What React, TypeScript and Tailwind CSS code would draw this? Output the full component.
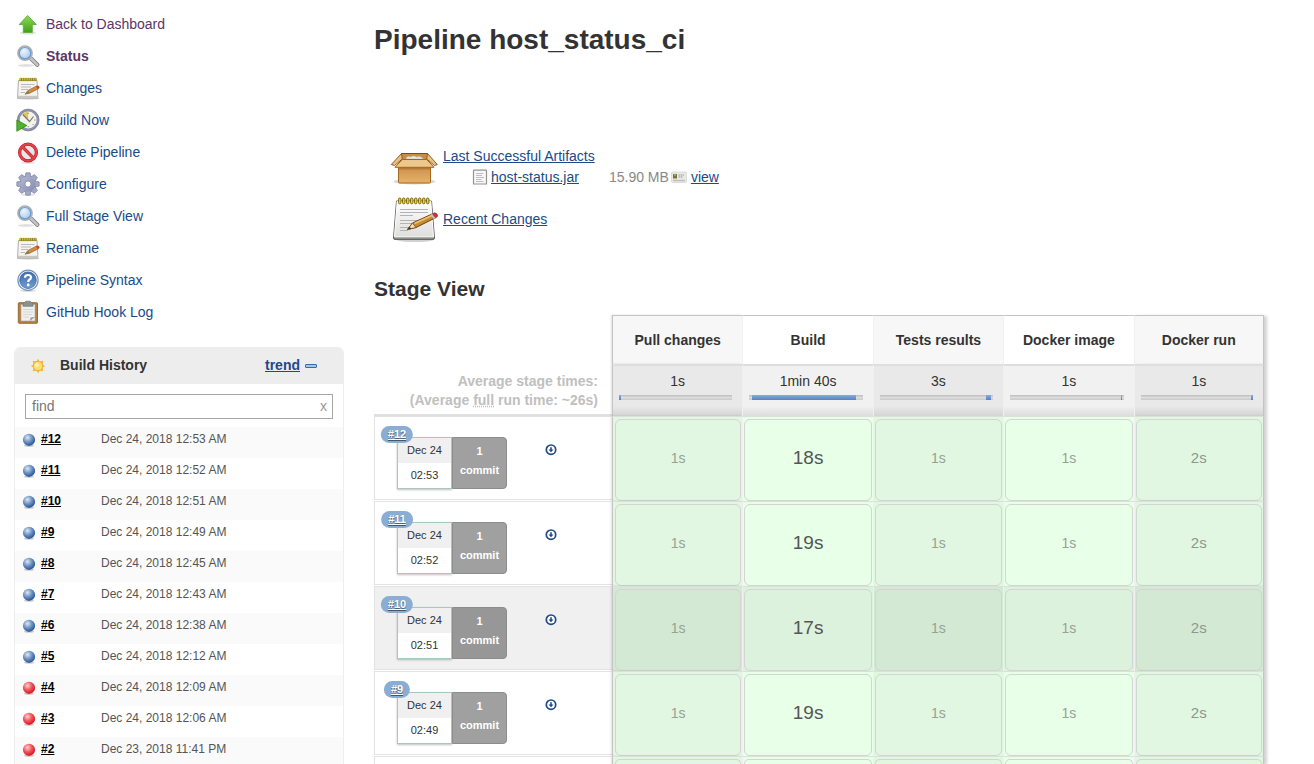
import React from "react";

type IconProps = { className?: string };

function UpArrow({ className }: IconProps) {
  return (
    <svg viewBox="0 0 24 24" className={className} aria-hidden="true">
      <defs>
        <linearGradient id="up-fill" x1="0" y1="0" x2="0" y2="1">
          <stop offset="0" stopColor="#8fdb57" />
          <stop offset="1" stopColor="#3fa01c" />
        </linearGradient>
      </defs>
      <ellipse cx="12" cy="21" rx="8" ry="1.6" fill="#000" opacity=".12" />
      <path d="M11.700 3.500 20.300 12.500H16.300V20.500H7.300V12.500H3.200Z" fill="url(#up-fill)" stroke="#5cae38" strokeWidth=".9" strokeLinejoin="round" />
    </svg>
  );
}

function Magnifier({ className }: IconProps) {
  return (
    <svg viewBox="0 0 24 24" className={className} aria-hidden="true">
      <defs>
        <radialGradient id="lens" cx=".4" cy=".35" r=".7">
          <stop offset="0" stopColor="#eef6fd" />
          <stop offset="1" stopColor="#9cc3e8" />
        </radialGradient>
      </defs>
      <ellipse cx="10" cy="21.500" rx="8" ry="1.500" fill="#000" opacity=".12" />
      <path d="m14.500 14 6.800 6.800" stroke="#808080" strokeWidth="4.200" strokeLinecap="round" />
      <path d="m15 14.500 6.300 6.300" stroke="#c4c4c4" strokeWidth="2.600" strokeLinecap="round" />
      <circle cx="9" cy="9.200" r="7" fill="url(#lens)" stroke="#b0b0b0" strokeWidth="1.800" />
      <circle cx="9" cy="9.200" r="5.700" fill="none" stroke="#6f9bd1" strokeWidth="1.200" />
    </svg>
  );
}

function Notepad({ className }: IconProps) {
  return (
    <svg viewBox="0 0 24 24" className={className} aria-hidden="true">
      <ellipse cx="12" cy="22.500" rx="11" ry="1.200" fill="#000" opacity=".15" />
      <path d="M2.500 4.500H21L22 22.300H1.500Z" fill="#f4f4f1" stroke="#b0b0ab" strokeWidth="1" />
      <path d="M1.700 19.800H21.900L22 22.300H1.500Z" fill="#c6c6c2" />
      <path d="M3.500 3.500H20.700" stroke="#8f7d20" strokeWidth="3.200" />
      <path d="M3.800 3.300H20.500" stroke="#d3bb43" strokeWidth="2.600" strokeDasharray="1.300 .9" />
      <path d="M5 8.500H18.500M5 11H15M5 13.500H12M4.500 16.500H9" stroke="#bbb" strokeWidth="1" />
      <path d="m9 18.200 3-3.800 8.800-4.500 1.700 2.800-8.900 4.500Z" fill="#d58c3a" stroke="#8a5520" strokeWidth=".6" />
      <path d="m9 18.200 3-3.800 1.600 2.800Z" fill="#8e7a50" />
      <path d="m20 10.400 1.700-.9q1.900.2 1.900 2.500l-2.100 1.100Z" fill="#d9402f" />
    </svg>
  );
}

function BigNotepad({ className }: IconProps) {
  return (
    <svg viewBox="0 0 48 48" className={className} aria-hidden="true">
      <defs>
        <linearGradient id="paper" x1="0" y1="0" x2="0" y2="1">
          <stop offset="0" stopColor="#fff" />
          <stop offset="1" stopColor="#dededc" />
        </linearGradient>
      </defs>
      <ellipse cx="25" cy="45" rx="18" ry="2" fill="#000" opacity=".18" />
      <path d="M6.500 6H41.500L44.500 43Q44.500 44.500 43 44.500H5Q3.500 44.500 3.500 43Z" fill="#8c8c89" stroke="#666" strokeWidth="1" />
      <path d="M7.200 6.500H40.800L43.500 41.800H4.500Z" fill="url(#paper)" stroke="#fff" strokeWidth="1" />
      <path d="M10 14.500H38M10 17.500H38M10 20.500H23M10 25.500H32M10 28.500H26M10 32.500H23M10 35.500H18" stroke="#b3b3b3" strokeWidth="1" />
      {[8.500, 12.500, 16.500, 20.500, 24.500, 28.500, 32.500, 36.500].map((x) => (
        <rect key={x} x={x} y="3" width="2.500" height="5.800" rx="1.200" fill="#e8cf3c" stroke="#6f5c08" strokeWidth=".9" />
      ))}
      <path d="M17.500 34.500 22.500 28 42.500 18.800 46 22.500 26 32.500Z" fill="#c98b32" stroke="#6f4109" strokeWidth="1" />
      <path d="M24.500 28.500 43 20" stroke="#ebc47b" strokeWidth="1.600" />
      <path d="M17.500 34.500 22.500 28 26 32.500Z" fill="#f1ddb0" stroke="#6f4109" strokeWidth=".7" />
      <path d="m17.500 34.500 2.200-2.800 1.500 2Z" fill="#333" />
      <path d="m40.500 19.700 2.500-1.200 3.500 4.200-2.700 1.200Z" fill="#bdc3cc" />
      <path d="m42.500 18.700 2-.9q3 .4 3.200 3.400l-2.200 1.600Z" fill="#e02a38" stroke="#9c1822" strokeWidth=".6" />
    </svg>
  );
}

function ClockPlay({ className }: IconProps) {
  return (
    <svg viewBox="0 0 24 24" className={className} aria-hidden="true">
      <circle cx="12.200" cy="12" r="9.600" fill="#f4f3ea" stroke="#9093ad" strokeWidth="2.400" />
      <circle cx="12.200" cy="12" r="10.900" fill="none" stroke="#6c6f88" strokeWidth=".7" />
      <path d="M12.200 12 6.500 6Q9 3.700 12.200 3.700Z" fill="#e3c654" />
      <path d="M6.800 6.500 13.500 13.500 17.500 8.500" fill="none" stroke="#777" strokeWidth="1.200" />
      <path d="M12.200 4.800V6M19.500 12H18.200M12.200 19.200V18M17.500 17l-.8-.8" stroke="#888" strokeWidth="1" />
      <path d="M.8 12 10.800 17.500.8 23.300Z" fill="#4db22c" stroke="#2f8716" strokeWidth=".8" />
    </svg>
  );
}

function NoEntry({ className }: IconProps) {
  return (
    <svg viewBox="0 0 24 24" className={className} aria-hidden="true">
      <ellipse cx="12" cy="22.800" rx="7" ry="1" fill="#000" opacity=".12" />
      <circle cx="12" cy="12.500" r="8.400" fill="#e9e6e6" stroke="#c01824" strokeWidth="3.200" />
      <path d="m6.200 6.700 11.600 11.600" stroke="#c01824" strokeWidth="3.200" />
      <circle cx="12" cy="12.500" r="8.400" fill="none" stroke="#e3404a" strokeWidth="2.200" />
      <path d="m6.200 6.700 11.600 11.600" stroke="#e3404a" strokeWidth="2.200" />
    </svg>
  );
}

function Gear({ className }: IconProps) {
  return (
    <svg viewBox="0 0 24 24" className={className} aria-hidden="true">
      <defs>
        <linearGradient id="gear" x1="0" y1="0" x2="1" y2="1">
          <stop offset="0" stopColor="#b4b9d2" />
          <stop offset="1" stopColor="#8589b0" />
        </linearGradient>
      </defs>
      <ellipse cx="12" cy="22.800" rx="7" ry="1" fill="#000" opacity=".12" />
      <g fill="#a3a8c6" stroke="#7f84a6" strokeWidth=".7">
        {[0, 45, 90, 135, 180, 225, 270, 315].map((a) => (
          <path key={a} d="M8.800 6 9.900.8H14.100L15.200 6Z" transform={`rotate(${a} 12 12)`} />
        ))}
      </g>
      <circle cx="12" cy="12" r="7.600" fill="url(#gear)" />
      <circle cx="12" cy="12" r="3.100" fill="#fff" stroke="#8489ab" strokeWidth=".9" />
    </svg>
  );
}

function Help({ className }: IconProps) {
  return (
    <svg viewBox="0 0 24 24" className={className} aria-hidden="true">
      <defs>
        <linearGradient id="help" x1="0" y1="0" x2="0" y2="1">
          <stop offset="0" stopColor="#3f6aa6" />
          <stop offset="1" stopColor="#6f9ed6" />
        </linearGradient>
      </defs>
      <ellipse cx="12" cy="22.800" rx="8" ry="1.100" fill="#000" opacity=".15" />
      <circle cx="12" cy="12.200" r="10.100" fill="#fff" stroke="#6f92c2" strokeWidth="1.200" />
      <circle cx="12" cy="12.200" r="8.300" fill="url(#help)" stroke="#3c659f" strokeWidth=".8" />
      <path d="M9 9.700Q9 7 12 7T15 9.500Q15 11 13.300 11.800 12.200 12.400 12.200 14" fill="none" stroke="#fff" strokeWidth="2.200" />
      <circle cx="12.200" cy="17" r="1.400" fill="#fff" />
    </svg>
  );
}

function Clipboard({ className }: IconProps) {
  return (
    <svg viewBox="0 0 24 24" className={className} aria-hidden="true">
      <rect x="2.300" y="2.700" width="19.200" height="20.600" rx=".8" fill="#b87f3c" stroke="#8f6229" strokeWidth=".9" />
      <rect x="5" y="4.500" width="14" height="16.500" fill="#f0f0ee" stroke="#a5a5a5" strokeWidth=".6" />
      <path d="M7 9.500H17M7 12H17M7 14.500H16M7 17H13" stroke="#d6d6d4" strokeWidth="1" />
      <path d="M14 21 14.500 17.500 19 17Z" fill="#999" />
      <path d="M7 6.300V4Q7 3 8.200 2.700L10 1.200H14L15.800 2.700Q17 3 17 4V6.300Z" fill="#8b918b" stroke="#737873" strokeWidth=".7" />
    </svg>
  );
}

function Box({ className }: IconProps) {
  return (
    <svg viewBox="0 0 48 48" className={className} aria-hidden="true">
      <defs>
        <linearGradient id="box-front" x1="0" y1="0" x2="0" y2="1">
          <stop offset="0" stopColor="#c98f4a" />
          <stop offset="1" stopColor="#e6b26c" />
        </linearGradient>
      </defs>
      <ellipse cx="24.500" cy="38.500" rx="21" ry="3" fill="#000" opacity=".15" />
      <path d="M11.500 10.500H37.500L39 23H10Z" fill="#c58e48" stroke="#7c4e15" strokeWidth="1" />
      <path d="M16 16Q17 12.500 20.500 14 24 12 26.500 14 30.500 12.500 33.500 16Z" fill="#e9ebe6" stroke="#b8bdb4" strokeWidth=".6" />
      <path d="M8.500 23H40.500V39Q40.500 40 39.500 40H9.500Q8.500 40 8.500 39Z" fill="url(#box-front)" stroke="#a4661b" strokeWidth="1" />
      <path d="M9 25.500H40" stroke="#9c6222" strokeWidth="2" opacity=".5" />
      <path d="M12.300 16.500H36.700L44 24.300H5Z" fill="#eec78e" stroke="#a4661b" strokeWidth="1" />
      <path d="M11.500 10.500 12.300 16 4.500 22.500 1.300 21.500Z" fill="#e9bf84" stroke="#95601b" strokeWidth="1" />
      <path d="M37.500 10.500 36.700 16 44.500 22.500 47.300 21.500Z" fill="#e9bf84" stroke="#95601b" strokeWidth="1" />
    </svg>
  );
}

function TextFile({ className }: IconProps) {
  return (
    <svg viewBox="0 0 16 16" className={className} aria-hidden="true">
      <rect x="1.500" y="1.200" width="13" height="13.800" rx=".6" fill="#f8f8f8" stroke="#939393" strokeWidth="1.200" />
      <path d="M4 4.500H11.500M4 6.500H10M4 8.500H12M4 10.500H9.500M4 12.500H11.500" stroke="#bdbdbd" strokeWidth="1" />
    </svg>
  );
}

function Card({ className }: IconProps) {
  return (
    <svg viewBox="0 0 16 16" className={className} aria-hidden="true">
      <rect x=".5" y="3" width="15" height="10.500" rx="1" fill="#e9e9e6" stroke="#d6d6d3" strokeWidth=".8" />
      <rect x="2" y="5" width="4" height="4.500" fill="#76743b" />
      <circle cx="4" cy="6" r="1.200" fill="#b39a5c" />
      <path d="M7.500 6H13.500M7.500 8H12" stroke="#9a9a9a" strokeWidth="1" strokeDasharray="1.500 .5" />
      <path d="M2 11.500H14" stroke="#bbb" strokeWidth="1.400" />
    </svg>
  );
}

function Sun({ className }: IconProps) {
  return (
    <svg viewBox="0 0 16 16" className={className} aria-hidden="true">
      <path d="M8 .8 9.500 3.600 13.300 2.700 12.400 6.500 15.300 8 12.400 9.500 13.300 13.300 9.500 12.400 8 15.300 6.500 12.400 2.700 13.300 3.600 9.500.8 8 3.600 6.500 2.700 2.700 6.500 3.600Z" fill="#f7b04d" />
      <circle cx="8" cy="8" r="4.800" fill="#fce06c" stroke="#f2ac3c" strokeWidth="1" />
      <circle cx="7" cy="7" r="2" fill="#fff3b0" />
    </svg>
  );
}

function Ball({ color }: { color: "blue" | "red" }) {
  const id = "ball-" + color;
  return (
    <svg viewBox="0 0 16 16" className="size-4 shrink-0" role="img" aria-label={color === "blue" ? "Success" : "Failed"}>
      <defs>
        <radialGradient id={id} cx=".38" cy=".32" r=".65">
          <stop offset="0" stopColor={color === "blue" ? "#dce8f2" : "#ffd2d2"} />
          <stop offset=".55" stopColor={color === "blue" ? "#6f93c4" : "#f2545c"} />
          <stop offset="1" stopColor={color === "blue" ? "#2f5b9b" : "#dc1a26"} />
        </radialGradient>
      </defs>
      <ellipse cx="8" cy="14.500" rx="5" ry="1.300" fill="#000" opacity=".2" />
      <circle cx="8" cy="8.800" r="6.100" fill={`url(#${id})`} />
    </svg>
  );
}

function Download({ className }: IconProps) {
  return (
    <svg viewBox="0 0 12 12" className={className} aria-hidden="true">
      <circle cx="6" cy="5.700" r="4.700" fill="#fff" stroke="#204a87" strokeWidth="1.700" />
      <path d="M5.200 3.200H6.800V5.500H8.500L6 8.200 3.500 5.500H5.200Z" fill="#204a87" />
    </svg>
  );
}

const tasks = [
  { label: "Back to Dashboard", Icon: UpArrow, style: "text-[#5c3566]" },
  { label: "Status", Icon: Magnifier, style: "font-bold text-[#5c3566]" },
  { label: "Changes", Icon: Notepad, style: "text-[#204a87]" },
  { label: "Build Now", Icon: ClockPlay, style: "text-[#204a87]" },
  { label: "Delete Pipeline", Icon: NoEntry, style: "text-[#204a87]" },
  { label: "Configure", Icon: Gear, style: "text-[#204a87]" },
  { label: "Full Stage View", Icon: Magnifier, style: "text-[#204a87]" },
  { label: "Rename", Icon: Notepad, style: "text-[#204a87]" },
  { label: "Pipeline Syntax", Icon: Help, style: "text-[#204a87]" },
  { label: "GitHub Hook Log", Icon: Clipboard, style: "text-[#204a87]" },
];

const builds: { id: string; date: string; color: "blue" | "red" }[] = [
  { id: "#12", date: "Dec 24, 2018 12:53 AM", color: "blue" },
  { id: "#11", date: "Dec 24, 2018 12:52 AM", color: "blue" },
  { id: "#10", date: "Dec 24, 2018 12:51 AM", color: "blue" },
  { id: "#9", date: "Dec 24, 2018 12:49 AM", color: "blue" },
  { id: "#8", date: "Dec 24, 2018 12:45 AM", color: "blue" },
  { id: "#7", date: "Dec 24, 2018 12:43 AM", color: "blue" },
  { id: "#6", date: "Dec 24, 2018 12:38 AM", color: "blue" },
  { id: "#5", date: "Dec 24, 2018 12:12 AM", color: "blue" },
  { id: "#4", date: "Dec 24, 2018 12:09 AM", color: "red" },
  { id: "#3", date: "Dec 24, 2018 12:06 AM", color: "red" },
  { id: "#2", date: "Dec 23, 2018 11:41 PM", color: "red" },
];

const stages = [
  { name: "Pull changes", average: "1s", start: 0, share: 2 },
  { name: "Build", average: "1min 40s", start: 2, share: 92 },
  { name: "Tests results", average: "3s", start: 94, share: 4 },
  { name: "Docker image", average: "1s", start: 98, share: 1 },
  { name: "Docker run", average: "1s", start: 98, share: 2 },
];

const runs = [
  { id: "#12", time: "02:53", cells: ["1s", "18s", "1s", "1s", "2s"] },
  { id: "#11", time: "02:52", cells: ["1s", "19s", "1s", "1s", "2s"] },
  { id: "#10", time: "02:51", cells: ["1s", "17s", "1s", "1s", "2s"], hovered: true },
  { id: "#9", time: "02:49", cells: ["1s", "19s", "1s", "1s", "2s"] },
];

function edge(i: number) {
  if (i === 0) return "border-l border-l-[#c4c4c4] shadow-[-1px_0_2px_rgba(0,0,0,0.12)]";
  if (i === stages.length - 1) return "border-l border-l-[#f0f0f0] border-r border-r-[#c4c4c4] shadow-[3px_1px_3px_rgba(0,0,0,0.18)]";
  return "border-l border-l-[#f0f0f0]";
}

function Sidebar() {
  return (
    <aside className="w-[330px] shrink-0">
      <nav aria-label="Tasks">
        <ul>
          {tasks.map(({ label, Icon, style }) => (
            <li key={label} className="h-8 pl-0.5">
              <a href="#" className={`inline-flex items-center gap-1.5 text-sm leading-6 ${style}`}>
                <Icon className="size-6" />
                {label}
              </a>
            </li>
          ))}
        </ul>
      </nav>
      <section className="mt-[15px] overflow-hidden rounded-t-md border border-[#eeeeee]">
        <header className="flex h-9 items-center bg-[#ededed] pr-[26px] pb-0.5 pl-[15px]">
          <Sun className="mt-0.5 size-4" />
          <h2 className="ml-3.5 flex-1 text-sm font-bold text-[#333]">Build History</h2>
          <a href="#" className="text-sm font-bold text-[#204a87] underline">trend</a>
          <svg viewBox="0 0 12 4" className="mt-0.5 ml-[5px] h-1 w-3" aria-hidden="true">
            <rect x=".5" y=".5" width="11" height="3" rx=".5" fill="#a7c3e6" stroke="#3b6aa8" />
          </svg>
        </header>
        <div className="px-2.5 pt-2.5 pb-2">
          <form className="flex h-[25px] items-center border border-[#a6a6a6] pb-px">
            <input aria-label="Find builds" placeholder="find" className="min-w-0 flex-1 px-1.5 text-sm text-[#333] outline-none placeholder:text-[#777]" />
            <button type="reset" aria-label="Clear" className="px-[5px] text-sm text-[#999]">x</button>
          </form>
        </div>
        <table className="w-full text-xs text-[#555]">
          <tbody>
            {builds.map((b) => (
              <tr key={b.id} className="h-[31px] odd:bg-[#fafafa]">
                <td className="w-[86px] p-0 pb-2 pl-1.5">
                  <span className="flex items-center gap-1">
                    <Ball color={b.color} />
                    <a href="#" className="font-bold text-black underline">{b.id}</a>
                  </span>
                </td>
                <td className="p-0 pb-2">{b.date}</td>
              </tr>
            ))}
          </tbody>
        </table>
      </section>
    </aside>
  );
}

function StageView() {
  return (
    <table className="w-full table-fixed border-separate border-spacing-0 text-center text-sm text-[#333]">
      <colgroup>
        <col className="w-[238px]" />
        {stages.map((s) => (
          <col key={s.name} />
        ))}
      </colgroup>
      <thead>
        <tr className="h-[49px]">
          <td />
          {stages.map((s, i) => (
            <th key={s.name} className={`border-t border-t-[#c4c4c4] p-0 font-bold ${i % 2 ? "bg-white" : "bg-[#f7f7f7]"} ${edge(i)}`}>
              {s.name}
            </th>
          ))}
        </tr>
        <tr className="h-[52px]">
          <th className="border-b-2 border-b-[#e0e0e0] p-0 pt-1 pr-3.5 text-right leading-[19px] font-bold whitespace-nowrap text-[#c0c0c0]">
            Average stage times:
            <br />
            (Average <u className="decoration-dotted">full</u> run time: ~26s)
          </th>
          {stages.map((s, i) => (
            <td
              key={s.name}
              className={`border-t-2 border-t-[#dedede] bg-linear-to-b from-80% p-0 pt-[5px] pr-2.5 pl-1.5 align-top ${
                i % 2 ? "from-[#f1f1f1] to-[#dcdcdc]" : "from-[#e9e9e9] to-[#d4d4d4]"
              } ${edge(i)}`}
            >
              <span className="block pl-1 leading-5">{s.average}</span>
              <div className="mt-1 flex h-[5px] bg-linear-to-b from-[#bdbdbd] via-[#dcdcdc] to-[#c9c9c9]">
                <div className="bg-linear-to-b from-[#88aed8] to-[#5580cc]" style={{ marginLeft: `${s.start}%`, width: `${s.share}%` }} />
              </div>
            </td>
          ))}
        </tr>
      </thead>
      <tbody>
        {runs.map((r) => (
          <tr key={r.id} className="h-[85px]">
            <td className="p-0 pb-px">
              <div className={`h-[84px] border border-r-0 border-[#e3e3e3] pt-2 pl-1.5 ${r.hovered ? "bg-[#f0f0f0]" : "bg-white"}`}>
                <div className="flex items-start">
                  <div className="relative mt-3 ml-4 flex h-[52px] w-[110px] text-[11px]">
                    <a
                      href="#"
                      className="absolute -top-[11px] left-0 -translate-x-1/2 rounded-full bg-[#8aadd3] px-[7px] text-[11px] leading-[17px] font-bold text-white underline text-shadow-[0_1px_1px_rgba(0,0,0,0.5)]"
                    >
                      {r.id}
                    </a>
                    <div className="flex w-[55px] flex-col border border-[#a9c8b9] bg-white shadow-[0_1px_2px_rgba(0,0,0,0.25)]">
                      <span className="bg-[#f0f0f0] leading-[25px]">Dec 24</span>
                      <span className="leading-[25px]">{r.time}</span>
                    </div>
                    <div className={`flex-1 rounded-r border border-[#8c8c8c] pt-1 leading-[19px] font-bold text-white ${r.hovered ? "bg-[#979797]" : "bg-[#a0a0a0]"}`}>
                      1<br />commit
                    </div>
                  </div>
                  <a href="#" aria-label="Download artifacts" className="mt-[19px] ml-[38px]">
                    <Download className="size-3" />
                  </a>
                </div>
              </div>
            </td>
            {r.cells.map((c, i) => (
              <td
                key={i}
                className={`border-t border-t-[#dcdfdc] p-0 pt-0.5 pr-px ${i === 0 ? "pl-0.5" : "pl-px"} ${
                  r.hovered ? (i % 2 ? "bg-[#dcf2dc]" : "bg-[#d4e9d4]") : i % 2 ? "bg-[#e8ffe8]" : "bg-[#e1f7e1]"
                } ${edge(i)}`}
              >
                <div
                  className={`flex h-[82px] items-center justify-center rounded-md border border-[#d0d6d0] pb-1 ${
                    i === 1 ? "text-[19px] text-[#555]" : i === 4 ? "text-[15px] text-[#8d988d]" : "text-sm text-[#96a296]"
                  }`}
                >
                  {c}
                </div>
              </td>
            ))}
          </tr>
        ))}
        <tr className="h-2">
          <td className="border-t border-l border-[#e3e3e3] p-0" />
          {stages.map((s, i) => (
            <td
              key={s.name}
              className={`border-t border-t-[#dcdfdc] p-0 pt-0.5 pr-px ${i === 0 ? "pl-0.5" : "pl-px"} ${i % 2 ? "bg-[#e8ffe8]" : "bg-[#e1f7e1]"} ${edge(i)}`}
            >
              <div className="h-[5px] rounded-t-md border border-b-0 border-[#d0d6d0]" />
            </td>
          ))}
        </tr>
      </tbody>
    </table>
  );
}

export default function App() {
  return (
    <div className="min-h-screen bg-white font-['Liberation_Sans',Arial,sans-serif] text-[#333]">
      <div className="flex gap-[30px] pt-3 pr-[50px] pl-3.5">
        <Sidebar />
        <main className="min-w-0 flex-1 pt-2.5">
          <h1 className="text-[28px] leading-9 font-bold">Pipeline host_status_ci</h1>
          <div className="mt-[85px] ml-4 text-sm text-[#204a87]">
            <div className="flex gap-[5px]">
              <Box className="size-12" />
              <div>
                <a href="#" className="block leading-[26px] underline">Last Successful Artifacts</a>
                <div className="flex items-center pl-[29px] leading-4">
                  <TextFile className="size-4" />
                  <a href="#" className="ml-[3px] underline">host-status.jar</a>
                  <span className="ml-[30px] text-[#888]">15.90 MB</span>
                  <Card className="ml-0.5 size-4" />
                  <a href="#" className="ml-1 underline">view</a>
                </div>
              </div>
            </div>
            <div className="mt-1 flex items-center gap-[5px]">
              <BigNotepad className="size-12" />
              <a href="#" className="underline">Recent Changes</a>
            </div>
          </div>
          <h2 className="mt-[34px] mb-3.5 text-[21px] leading-6 font-bold">Stage View</h2>
          <StageView />
        </main>
      </div>
    </div>
  );
}
